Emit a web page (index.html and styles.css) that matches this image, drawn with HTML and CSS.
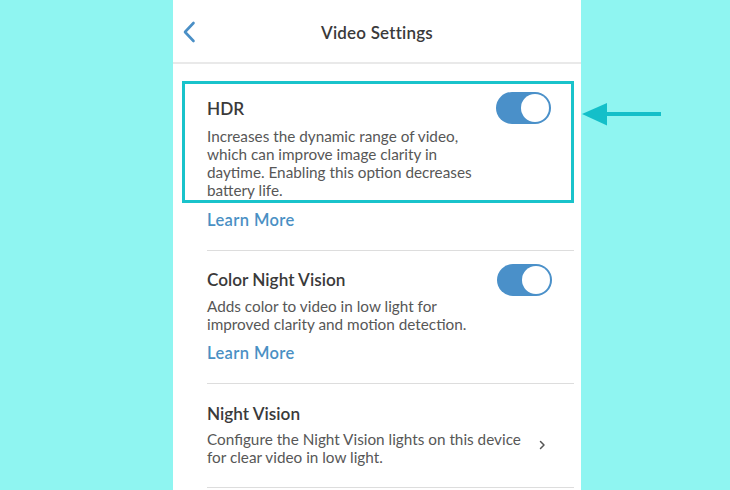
FILE: index.html
```html
<!DOCTYPE html>
<html>
<head>
<meta charset="utf-8">
<link rel="stylesheet" href="styles.css">
</head>
<body>
<div class="stage">
  <div class="panel">
    <div class="header">
      <span class="back">
        <svg width="14" height="22" viewBox="0 0 14 22"><path d="M11.5 2 L3 11 L11.5 20" fill="none" stroke="#4a8fc6" stroke-width="2.6" stroke-linecap="round" stroke-linejoin="round"/></svg>
      </span>
      <span class="header-title">Video Settings</span>
      <span></span>
    </div>
    <div class="list">
      <div class="highlight">
        <div class="row">
          <div class="text">
            <div class="title t-hdr">HDR</div>
            <div class="desc">Increases the dynamic range of video,<br>which can improve image clarity in<br>daytime. Enabling this option decreases<br>battery life.</div>
          </div>
          <div class="toggle"><span class="knob"></span></div>
        </div>
      </div>
      <div class="item">
        <a class="learn l-hdr">Learn More</a>
      </div>
      <div class="item bordered">
        <div class="row row2">
          <div class="text">
            <div class="title t-cnv">Color Night Vision</div>
            <div class="desc">Adds color to video in low light for<br>improved clarity and motion detection.</div>
            <a class="learn l-cnv">Learn More</a>
          </div>
          <div class="toggle"><span class="knob"></span></div>
        </div>
      </div>
      <div class="item bordered">
        <div class="row row3">
          <div class="text">
            <div class="title t-nv">Night Vision</div>
            <div class="desc">Configure the Night Vision lights on this device<br>for clear video in low light.</div>
          </div>
          <span class="chev">
            <svg width="7" height="10" viewBox="0 0 7 10"><path d="M1.5 1.5 L5 5 L1.5 8.5" fill="none" stroke="#555" stroke-width="1.5" stroke-linecap="round" stroke-linejoin="round"/></svg>
          </span>
        </div>
      </div>
      <div class="item bordered"></div>
    </div>
  </div>
  <svg class="arrow" width="82" height="26" viewBox="0 0 82 26"><path d="M0 11 L25 0 L25 22.5 Z" fill="#14bfc9"/><rect x="22" y="9" width="57" height="4" fill="#14bfc9"/></svg>
</div>
</body>
</html>
```

FILE: styles.css
```css
html, body {
  margin: 0;
  padding: 0;
  background: #8ff5f1;
  font-family: Lato, "Open Sans", sans-serif;
}
.stage {
  position: relative;
  width: 730px;
  height: 490px;
  overflow: hidden;
}
.panel {
  width: 408px;
  height: 490px;
  margin-left: 173px;
  background: #ffffff;
  overflow: hidden;
}
.header {
  height: 62px;
  border-bottom: 2px solid #e9e9e9;
  display: grid;
  grid-template-columns: 1fr auto 1fr;
  align-items: center;
}
.back {
  padding-left: 9px;
  display: flex;
  align-items: center;
  padding-top: 2px;
}
.header-title {
  font-size: 17px;
  font-weight: 600;
  color: #3a3a3a;
  padding-top: 2px;
  letter-spacing: 0.2px;
}
.list {
  padding: 0 7px 0 9px;
}
.highlight {
  margin-top: 17px;
  border: 3px solid #19c3cb;
  padding: 8px 20px 1px 22px;
}
.row {
  display: flex;
  justify-content: space-between;
  align-items: flex-start;
}
.text {
  display: flex;
  flex-direction: column;
}
.title {
  font-size: 17.2px;
  line-height: 20px;
  font-weight: 600;
  color: #3a3a3a;
}
.t-hdr { margin-top: 7px; }
.desc {
  font-size: 15.3px;
  line-height: 18px;
  color: #575757;
  margin-top: 8px;
}
.toggle {
  width: 55px;
  height: 32px;
  border-radius: 16px;
  background: #4a90c9;
  position: relative;
  flex: none;
}
.knob {
  position: absolute;
  right: 2px;
  top: 2px;
  width: 28px;
  height: 28px;
  border-radius: 50%;
  background: #ffffff;
}
.item {
  margin-left: 25px;
  margin-right: 0;
}
.bordered {
  border-top: 1px solid #dddddd;
}
.learn {
  display: block;
  font-size: 16.5px;
  line-height: 20px;
  font-weight: 600;
  color: #4a90c4;
  letter-spacing: 0.4px;
}
.l-hdr {
  margin-top: 7px;
  margin-bottom: 20px;
}
.row2 {
  padding-right: 22px;
  padding-top: 13px;
}
.row2 .title { margin-top: 6px; }
.row2 .desc { margin-top: 7px; }
.l-cnv {
  margin-top: 10px;
  margin-bottom: 20px;
}
.row3 {
  padding-right: 28px;
  padding-top: 20px;
  padding-bottom: 21px;
  align-items: center;
}
.row3 .desc { margin-top: 6px; }
.chev {
  display: flex;
  padding-top: 20px;
}
.arrow {
  position: absolute;
  left: 582px;
  top: 103px;
}
```
